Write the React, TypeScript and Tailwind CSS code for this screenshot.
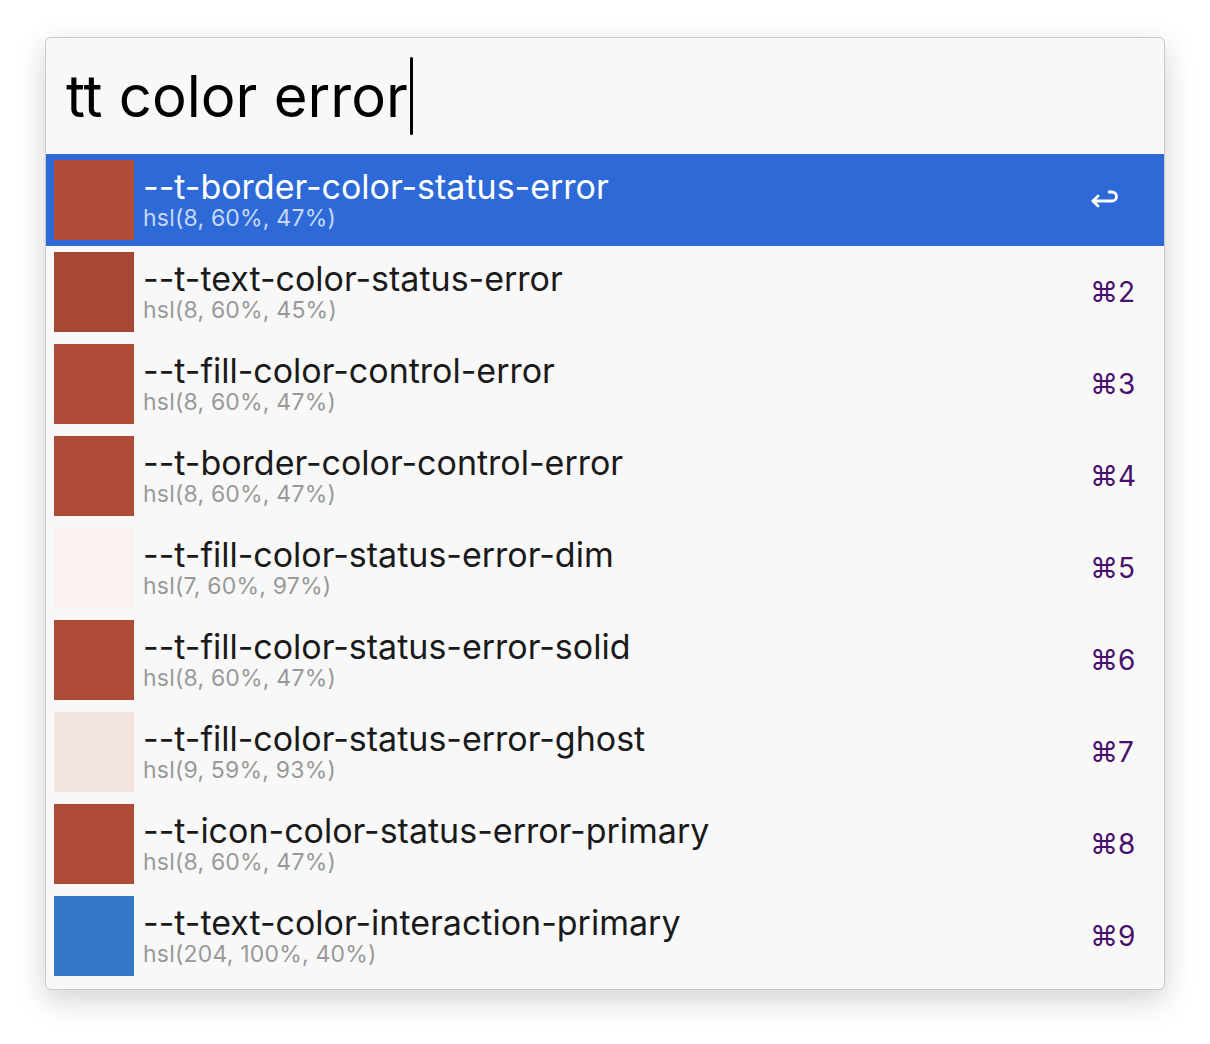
import React from 'react';

type Item = {
  name: string;
  value: string;
  swatch: string;
  key: string;
};

const items: Item[] = [
  { name: '--t-border-color-status-error', value: 'hsl(8, 60%, 47%)', swatch: 'bg-[#ae4c37]', key: '' },
  { name: '--t-text-color-status-error', value: 'hsl(8, 60%, 45%)', swatch: 'bg-[#a74835]', key: '⌘2' },
  { name: '--t-fill-color-control-error', value: 'hsl(8, 60%, 47%)', swatch: 'bg-[#ae4c37]', key: '⌘3' },
  { name: '--t-border-color-control-error', value: 'hsl(8, 60%, 47%)', swatch: 'bg-[#ae4c37]', key: '⌘4' },
  { name: '--t-fill-color-status-error-dim', value: 'hsl(7, 60%, 97%)', swatch: 'bg-[#fbf3f1]', key: '⌘5' },
  { name: '--t-fill-color-status-error-solid', value: 'hsl(8, 60%, 47%)', swatch: 'bg-[#ae4c37]', key: '⌘6' },
  { name: '--t-fill-color-status-error-ghost', value: 'hsl(9, 59%, 93%)', swatch: 'bg-[#f4e4e0]', key: '⌘7' },
  { name: '--t-icon-color-status-error-primary', value: 'hsl(8, 60%, 47%)', swatch: 'bg-[#ae4c37]', key: '⌘8' },
  { name: '--t-text-color-interaction-primary', value: 'hsl(204, 100%, 40%)', swatch: 'bg-[#3477c7]', key: '⌘9' },
];

function ReturnIcon() {
  return (
    <svg width="30" height="24" viewBox="0 0 30 24" fill="none" stroke="white" strokeWidth="2.8" strokeLinecap="round" strokeLinejoin="round">
      <path d="M19 4h3a4.5 4.5 0 0 1 0 9H3" />
      <path d="M8 8l-5 5 5 5" />
    </svg>
  );
}

export default function App() {
  return (
    <div className="min-h-[1044px] w-[1210px] bg-white pt-[37px] pl-[45px]" style={{ fontFamily: 'Inter, "Liberation Sans", sans-serif' }}>
      <div className="w-[1120px] rounded-[6px] border border-[#c9c9c9] bg-[#f8f8f8] pb-[7px] shadow-[0_10px_30px_rgba(0,0,0,0.18)] overflow-hidden">
        <div className="flex h-[116px] items-center pl-[20px]">
          <span className="text-[58px] leading-none text-black">tt color error</span>
          <span className="ml-[2px] h-[78px] w-[3px] rounded-sm bg-black" />
        </div>

        <ul>
          {items.map((item, i) => {
            const selected = i === 0;
            return (
              <li
                key={item.name}
                className={`flex h-[92px] items-center pl-[8px] pr-[28px] ${selected ? 'bg-[#2d6ad8]' : ''}`}
              >
                <div className={`h-[80px] w-[80px] shrink-0 ${item.swatch}`} />
                <div className="ml-[9px] flex flex-1 flex-col">
                  <span className={`text-[34px] leading-[36px] ${selected ? 'text-white' : 'text-[#1a1a1a]'}`}>
                    {item.name}
                  </span>
                  <span className={`text-[23px] leading-[26px] tracking-[0.2px] ${selected ? 'text-[#c8d8f6]' : 'text-[#999999]'}`}>
                    {item.value}
                  </span>
                </div>
                <div className="flex w-[46px] justify-start">
                  {selected ? (
                    <ReturnIcon />
                  ) : (
                    <span className="text-[28px] text-[#48106c]">{item.key}</span>
                  )}
                </div>
              </li>
            );
          })}
        </ul>
      </div>
    </div>
  );
}
